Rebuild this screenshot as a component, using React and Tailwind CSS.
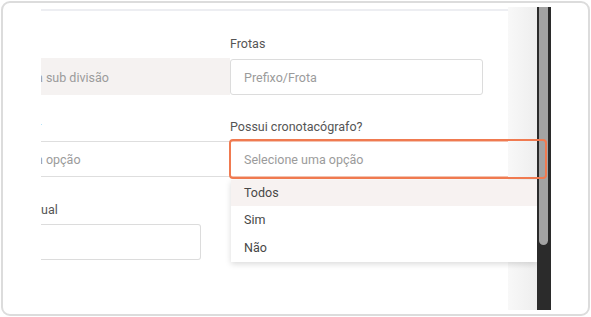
import React from "react";

export default function App() {
  const font = { fontFamily: "Roboto, 'Liberation Sans', sans-serif" };
  return (
    <div className="w-[591px] h-[317px] bg-white p-px" style={font}>
      <div className="h-[315px] w-[589px] border-2 border-[#dcdcdc] rounded-[9px] pl-[38px] pt-[4px]">
        <div className="relative flex h-[303px] w-[510px]">
          {/* panel */}
          <div className="relative w-[496px] h-full overflow-hidden bg-white">
            <div className="pt-[2px]">
              <div className="h-[2px] bg-[#edeef2]" />
            </div>
            <div className="grid grid-cols-[189px_1fr] pt-[23px] text-[12.5px]">
              {/* left column */}
              <div className="flex flex-col overflow-hidden">
                <div className="h-5 mb-[4px]" />
                <div className="h-[37px] bg-[#f5f2f1] flex items-center pt-[3px] text-[#9b9b9b] whitespace-nowrap">
                  <span className="-ml-[5px]">a sub divisão</span>
                </div>
                <div className="h-5 mt-[22px] mb-[4px] text-[#555] whitespace-nowrap flex items-center">
                  <span className="-ml-[4px]">r</span>
                </div>
                <div className="h-9 border-y border-[#dedede] flex items-center pt-[3px] text-[#9b9b9b] whitespace-nowrap">
                  <span className="-ml-[5px]">a opção</span>
                </div>
                <div className="h-5 mt-[23px] mb-[4px] text-[#555] whitespace-nowrap flex items-center">
                  <span className="-ml-[4px]">tual</span>
                </div>
                <div className="h-9 w-[160px] border border-l-0 border-[#dcdcdc] rounded-r-[3px]" />
              </div>
              {/* right column */}
              <div className="flex flex-col">
                <div className="h-5 mb-[5px] text-[#555] flex items-center">Frotas</div>
                <div className="h-9 w-[253px] border border-[#dcdcdc] rounded-[3px] flex items-center pt-[3px] pl-[13px] text-[#9b9b9b]">
                  Prefixo/Frota
                </div>
                <div className="h-5 mt-[22px] mb-[4px] text-[#555] flex items-center">Possui cronotacógrafo?</div>
                <div className="h-9 w-[320px] border border-[#f4c3b1] flex items-center pt-[3px] pl-[13px] text-[#9b9b9b]">
                  Selecione uma opção
                </div>
              </div>
            </div>
            {/* scroll fade */}
            <div className="absolute right-0 top-0 bottom-0 w-[29px] bg-gradient-to-r from-[#f8f8f8] to-[#eeeeee]" />
            {/* dropdown */}
            <div className="absolute left-[190px] right-0 top-[173px] h-[82px] bg-white shadow-[0_2px_6px_rgba(0,0,0,0.15)] text-[12.5px] text-[#474747] z-10">
              <div className="h-[26px] bg-[#f7f2f1] flex items-center pt-[1px] pl-[13px]">Todos</div>
              <div className="h-[28px] flex items-center pl-[13px]">Sim</div>
              <div className="h-[28px] flex items-center pl-[13px]">Não</div>
            </div>
          </div>
          {/* scrollbar */}
          <div className="w-[14px] h-full bg-[#2b2b2b] pl-[2px]">
            <div className="w-[9px] h-[238px] bg-[#a3a3a3] rounded-b-full" />
          </div>
          {/* focus ring */}
          <div className="absolute left-[188px] top-[132px] w-[318px] h-[40px] border-2 border-[#f07a50] rounded-[4px] z-20 pointer-events-none" />
        </div>
      </div>
    </div>
  );
}
